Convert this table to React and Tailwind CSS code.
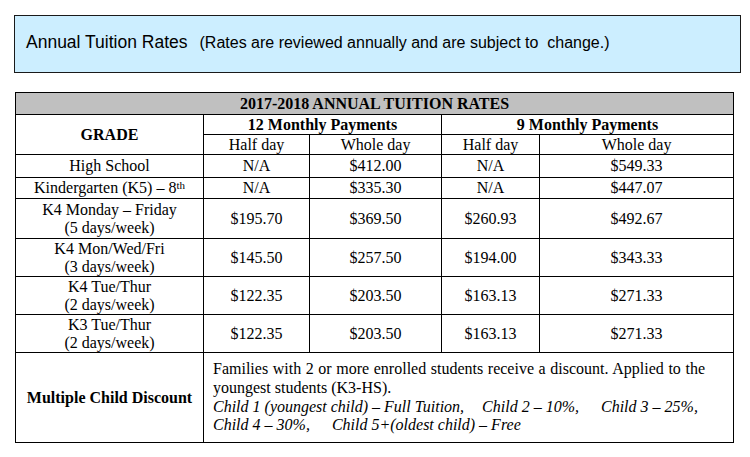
import React from 'react';

const serif = { fontFamily: '"Liberation Serif", "Times New Roman", serif' };

const rows = [
  { grade: 'High School', h12: 'N/A', w12: '$412.00', h9: 'N/A', w9: '$549.33', height: 'h-[23px]' },
  { grade: 'Kindergarten (K5) – 8', sup: 'th', h12: 'N/A', w12: '$335.30', h9: 'N/A', w9: '$447.07', height: 'h-[21px]' },
  { grade: 'K4 Monday – Friday', sub: '(5 days/week)', h12: '$195.70', w12: '$369.50', h9: '$260.93', w9: '$492.67', height: 'h-[40px]' },
  { grade: 'K4 Mon/Wed/Fri', sub: '(3 days/week)', h12: '$145.50', w12: '$257.50', h9: '$194.00', w9: '$343.33', height: 'h-[38px]' },
  { grade: 'K4 Tue/Thur', sub: '(2 days/week)', h12: '$122.35', w12: '$203.50', h9: '$163.13', w9: '$271.33', height: 'h-[38px]' },
  { grade: 'K3 Tue/Thur', sub: '(2 days/week)', h12: '$122.35', w12: '$203.50', h9: '$163.13', w9: '$271.33', height: 'h-[38px]' },
];

const cell = 'border border-black text-center align-middle p-0';

export default function App() {
  return (
    <div className="w-[750px] h-[457px] bg-white text-black overflow-hidden">
      {/* title box */}
      <div
        className="ml-[14px] mt-[15px] w-[727px] h-[58px] bg-[#cceeff] border border-[#1a1a1a] pl-[11px] pt-[13px]"
        style={{ fontFamily: '"Liberation Sans", Arial, sans-serif' }}
      >
        <span className="text-[17.5px]">Annual Tuition Rates</span>
        <span className="text-[16px] ml-[12px] whitespace-pre">(Rates are reviewed annually and are subject to  change.)</span>
      </div>

      {/* rates table */}
      <table
        className="ml-[15px] mt-[19px] w-[718px] border-collapse table-fixed text-[16px] leading-[18px]"
        style={serif}
      >
        <colgroup>
          <col className="w-[188px]" />
          <col className="w-[106px]" />
          <col className="w-[132px]" />
          <col className="w-[98px]" />
          <col className="w-[194px]" />
        </colgroup>
        <tbody>
          <tr className="h-[22px]">
            <td colSpan={5} className={`${cell} bg-[#c0c0c0] font-bold`}>2017-2018 ANNUAL TUITION RATES</td>
          </tr>
          <tr className="h-[20px]">
            <td rowSpan={2} className={`${cell} font-bold`}>GRADE</td>
            <td colSpan={2} className={`${cell} font-bold`}>12 Monthly Payments</td>
            <td colSpan={2} className={`${cell} font-bold`}>9 Monthly Payments</td>
          </tr>
          <tr className="h-[20px]">
            <td className={cell}>Half day</td>
            <td className={cell}>Whole day</td>
            <td className={cell}>Half day</td>
            <td className={cell}>Whole day</td>
          </tr>
          {rows.map((r) => (
            <tr key={r.grade + r.h12} className={r.height}>
              <td className={cell}>
                {r.grade}
                {r.sup && <span className="relative -top-[4px] text-[11px] leading-none">{r.sup}</span>}
                {r.sub && <div>{r.sub}</div>}
              </td>
              <td className={cell}>{r.h12}</td>
              <td className={cell}>{r.w12}</td>
              <td className={cell}>{r.h9}</td>
              <td className={cell}>{r.w9}</td>
            </tr>
          ))}
          <tr className="h-[90px]">
            <td className={`${cell} font-bold`}>Multiple Child Discount</td>
            <td colSpan={4} className="border border-black align-middle pl-[9px] pr-[28px] text-left leading-[18.7px]">
              <p className="text-justify">
                Families with 2 or more enrolled students receive a discount. Applied to the youngest students (K3-HS).
              </p>
              <p className="italic">
                Child 1 (youngest child) – Full Tuition,
                <span className="ml-[18px]">Child 2 – 10%,</span>
                <span className="ml-[22px]">Child 3 – 25%,</span>
              </p>
              <p className="italic">
                Child 4 – 30%,
                <span className="ml-[22px]">Child 5+(oldest child) – Free</span>
              </p>
            </td>
          </tr>
        </tbody>
      </table>
    </div>
  );
}
